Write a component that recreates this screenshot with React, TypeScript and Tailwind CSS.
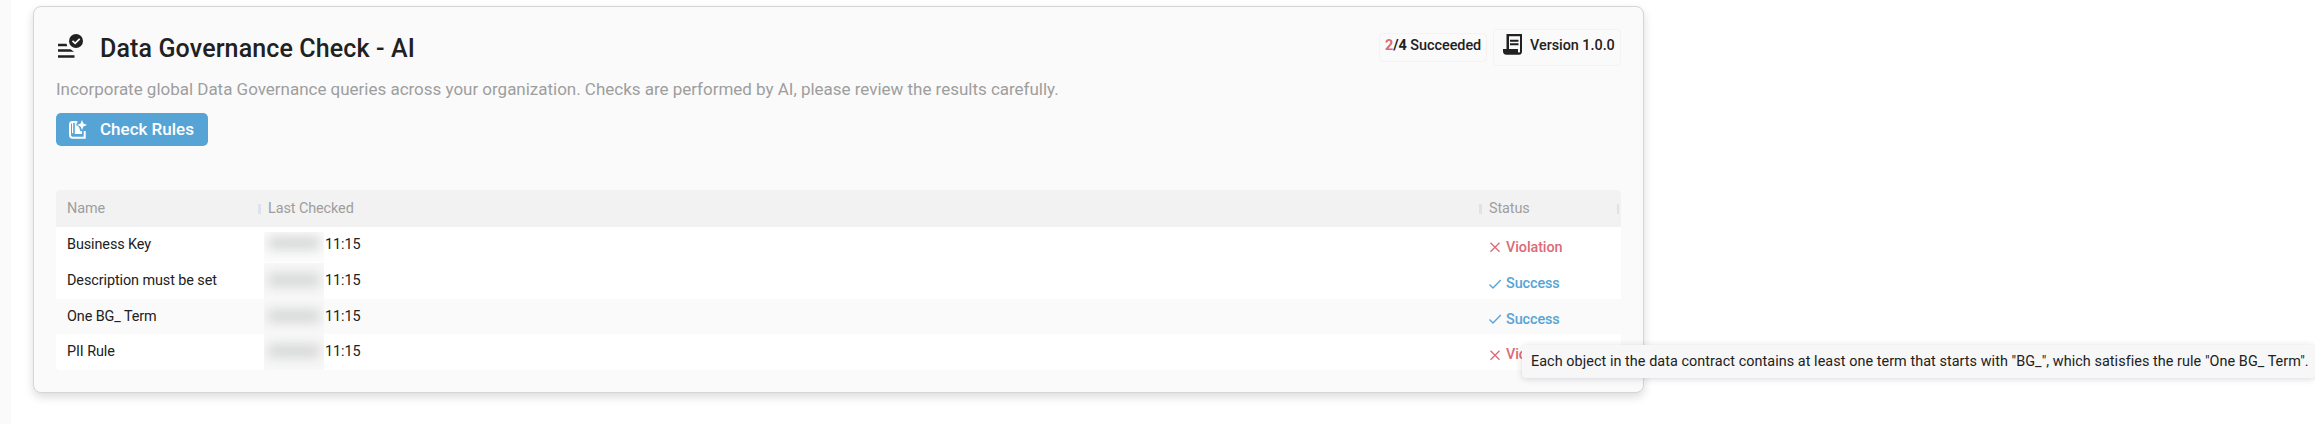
import React from 'react';

type Rule = {
  name: string;
  time: string;
  success: boolean;
};

const rules: Rule[] = [
  { name: 'Business Key', time: '11:15', success: false },
  { name: 'Description must be set', time: '11:15', success: true },
  { name: 'One BG_ Term', time: '11:15', success: true },
  { name: 'PII Rule', time: '11:15', success: false },
];

const ChecklistIcon = () => (
  <svg width="28" height="26" viewBox="0 0 28 26">
    <path d="M2 9.700h8.500l.8 2.500H2zM2 15.300h12.500l3.500 2.500H2zM2 21.300h16.500v2.500H2z" fill="#212121" />
    <circle cx="20" cy="7" r="7" fill="#212121" />
    <path d="M16.500 6.800l2.600 2.600 4.600-4.600" fill="none" stroke="#fafafa" strokeWidth="1.700" />
  </svg>
);

const BookSparkIcon = () => (
  <svg width="20" height="20" viewBox="0 0 20 20">
    <path d="M9 2H4.500C3 2 2 3 2 4.500V15c0 1.700 1 2.700 2.700 2.700h12V11" fill="none" stroke="#fff" strokeWidth="2" />
    <path d="M4 2.500h1.200v10.700H4z" fill="#fff" />
    <path d="M6.800 1.500h3L8 5l3 2 1.500 4.500 1.500-.5v3H6.800z" fill="#fff" />
    <path d="M14 0l1.400 3.600L19 5l-3.600 1.400L14 10l-1.400-3.600L9 5l3.600-1.400z" fill="#fff" />
  </svg>
);

const ContractIcon = () => (
  <svg width="20" height="22" viewBox="0 0 20 22">
    <path d="M3.500 0H19v17.500c0 2-1.200 3.300-3 3.300H3.500C1.500 20.800 0 19.500 0 17.500V15h3.500z" fill="#212121" />
    <path d="M6 2.300h11v15.200c0 .8-.4 1.100-1 1.100s-1-.4-1-1.100V15H6z" fill="#fafafa" />
    <path d="M7 6.700h8.500M7 10.200h8.500" stroke="#212121" strokeWidth="2" />
  </svg>
);

const Status = ({ success }: { success: boolean }) => (
  <div className={`flex items-center pt-[6px] ${success ? 'text-[#56a4d6]' : 'text-[#dc6a75]'}`}>
    <svg className="mr-[4px]" width="14" height="14" viewBox="0 0 14 14" fill="none" stroke="currentColor" strokeWidth="1.3">
      {success ? <path d="M1.500 7.500l3.500 3.500 7.800-8" /> : <path d="M2.500 2.800l9 9M11.500 2.800l-9 9" />}
    </svg>
    <span className="font-[480]">{success ? 'Success' : 'Violation'}</span>
  </div>
);

const App: React.FC = () => {
  return (
    <div className="relative flex h-[424px] w-[2315px] overflow-hidden bg-white font-['Roboto',sans-serif] text-[#212121]">
      <div className="w-[11px] bg-[#fafafa]" />

      <div className="ml-[22px] mt-[6px] h-[387px] w-[1611px] rounded-[8px] border border-[#d5d5d5] bg-[#fafafa] px-[22px] shadow-[0_4px_10px_rgba(0,0,0,0.14)]">
        <div className="flex h-[68px] justify-between">
          <div className="flex pt-[27px]">
            <ChecklistIcon />
            <h1 className="ml-[16px] mt-[-1px] text-[25px] leading-[32px] font-[480] tracking-[0.13px]">Data Governance Check - AI</h1>
          </div>
          <div className="flex items-start gap-[6px] pt-[22px]">
            <div className="mt-[4px] flex h-[29px] w-[108px] rounded-[4px] border border-[#f3f3f3] pl-[5px] pt-px text-[14.4px] font-[480]">
              <span className="whitespace-nowrap leading-[21px] tracking-[-0.03px]">
                <b className="text-[#dc6a75]">2</b>
                <b>/4</b> Succeeded
              </span>
            </div>
            <div className="flex h-[37px] w-[128px] rounded-[4px] border border-[#f3f3f3] pl-[9px] pt-[4px] text-[14.4px] font-[480]">
              <ContractIcon />
              <span className="ml-[7px] mt-px whitespace-nowrap leading-[21px] tracking-[-0.03px]">Version 1.0.0</span>
            </div>
          </div>
        </div>

        <p className="text-[17px] leading-[28px] tracking-[-0.018px] text-[#9e9e9e]">
          Incorporate global Data Governance queries across your organization. Checks are performed by AI, please review the results carefully.
        </p>

        <button className="mt-[10px] flex h-[33px] w-[152px] items-center rounded-[5px] bg-[#56a4d6] pl-[12px] text-[17px] font-[480] text-white">
          <BookSparkIcon />
          <span className="ml-[12px] whitespace-nowrap">Check Rules</span>
        </button>

        <div className="mt-[44px] w-[1565px] overflow-hidden rounded-[4px] bg-white text-[14.4px] tracking-[-0.08px]">
          <div className="flex h-[37px] items-center bg-[#f2f2f2] text-[#9e9e9e]">
            <span className="w-[202px] pl-[11px]">Name</span>
            <span className="h-[10px] w-[3px] bg-[#dde2eb]" />
            <span className="w-[1218px] pl-[7px]">Last Checked</span>
            <span className="h-[10px] w-[3px] bg-[#dde2eb]" />
            <span className="w-[135px] pl-[7px]">Status</span>
            <span className="h-[10px] w-[2px] bg-[#dde2eb]" />
          </div>
          {rules.map((rule, i) => (
            <div key={rule.name} className={`flex h-[35.75px] items-center ${i === 0 ? 'pb-px' : ''} ${i === 2 ? 'bg-[#fafafa]' : ''}`}>
              <span className="w-[208px] pl-[11px]">{rule.name}</span>
              <span className={`w-[60px] overflow-hidden ${i === 0 ? 'h-[30px] self-end bg-[#fcfcfc] pt-[4px]' : 'h-full bg-[#f8f8f8] pt-[10px]'}`}>
                <span className="mx-[4px] block h-[14px] bg-[#d6d8d7] blur-[6px]" />
              </span>
              <span className="w-[1164px] pl-px">{rule.time}</span>
              <Status success={rule.success} />
            </div>
          ))}
        </div>
      </div>

      <div className="absolute top-[345px] left-[1522px] h-[33px] w-[793px] rounded-[4px] bg-[#f7f7f7] pl-[9px] text-[14.4px] leading-[33px] tracking-[0.058px] whitespace-nowrap shadow-[0_1px_6px_rgba(60,60,90,0.2)]">
        Each object in the data contract contains at least one term that starts with "BG_", which satisfies the rule "One BG_ Term".
      </div>
    </div>
  );
};

export default App;
